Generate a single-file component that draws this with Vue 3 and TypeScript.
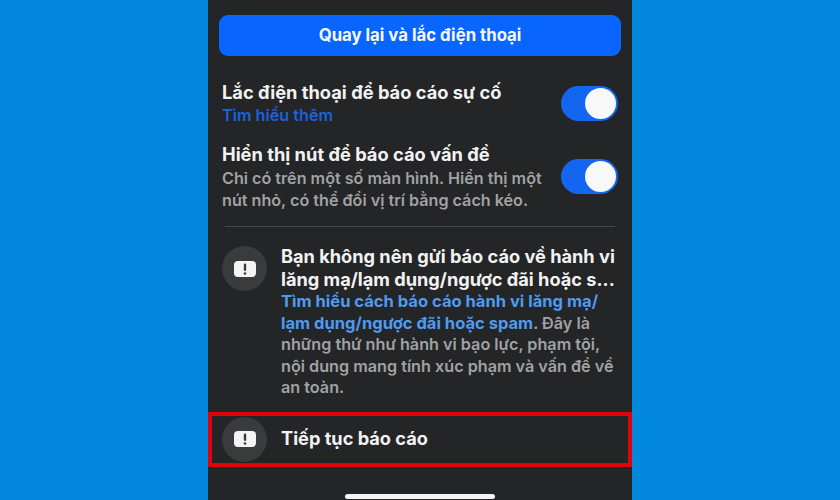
<script setup lang="ts">
const toggles = [
  { id: 1, title: 'Lắc điện thoại để báo cáo sự cố' },
  { id: 2, title: 'Hiển thị nút để báo cáo vấn đề' },
]
</script>

<template>
  <div class="stage">
    <main class="phone">
      <button class="cta">Quay lại và lắc điện thoại</button>

      <section class="row first">
        <div class="copy">
          <h2>{{ toggles[0].title }}</h2>
          <a class="more">Tìm hiểu thêm</a>
        </div>
        <span class="toggle"><i></i></span>
      </section>

      <section class="row second">
        <div class="copy">
          <h2>{{ toggles[1].title }}</h2>
          <p>Chỉ có trên một số màn hình. Hiển thị một<br />nút nhỏ, có thể đổi vị trí bằng cách kéo.</p>
        </div>
        <span class="toggle"><i></i></span>
      </section>

      <hr />

      <section class="notice">
        <span class="badge">
          <svg width="22" height="16" viewBox="0 0 22 16"><rect width="22" height="16" rx="4" fill="#f4f4f4" /><rect x="9.8" y="2.5" width="2.4" height="7.5" rx="1.2" fill="#3a3b3c" /><circle cx="11" cy="12.5" r="1.3" fill="#3a3b3c" /></svg>
        </span>
        <div class="notice-copy">
          <h3>Bạn không nên gửi báo cáo về hành vi<br />lăng mạ/lạm dụng/ngược đãi hoặc s...</h3>
          <p><b>Tìm hiểu cách báo cáo hành vi lăng mạ/<br />lạm dụng/ngược đãi hoặc spam</b>. Đây là<br />những thứ như hành vi bạo lực, phạm tội,<br />nội dung mang tính xúc phạm và vấn đề về<br />an toàn.</p>
        </div>
      </section>

      <section class="continue">
        <span class="badge">
          <svg width="22" height="16" viewBox="0 0 22 16"><rect width="22" height="16" rx="4" fill="#f4f4f4" /><rect x="9.8" y="2.5" width="2.4" height="7.5" rx="1.2" fill="#3a3b3c" /><circle cx="11" cy="12.5" r="1.3" fill="#3a3b3c" /></svg>
        </span>
        <strong>Tiếp tục báo cáo</strong>
      </section>

      <div class="home"></div>
    </main>
  </div>
</template>

<style scoped>
.stage {
  width: 840px;
  height: 500px;
  overflow: hidden;
  background: #0288dc;
  display: flex;
  justify-content: center;
  font-family: Inter, "Liberation Sans", sans-serif;
}
.phone {
  width: 424px;
  height: 500px;
  background: #242526;
  padding-top: 15px;
  box-sizing: border-box;
  display: flex;
  flex-direction: column;
}
.cta {
  width: 402px;
  height: 41px;
  margin: 0 11px;
  padding: 0 0 2px;
  flex: none;
  border: 0;
  border-radius: 9px;
  background: #0866ff;
  color: #f6f8ff;
  font: 700 16.75px Inter, "Liberation Sans", sans-serif;
}
.row {
  display: flex;
  justify-content: space-between;
  align-items: center;
  padding: 0 14px 0 14px;
}
.first { margin-top: 24px; }
.second { margin-top: 16px; }
h2 {
  margin: 0;
  color: #f2f2f2;
  font-size: 18.3px;
  line-height: 24px;
  font-weight: 700;
  white-space: nowrap;
}
.more {
  display: block;
  color: #1c62d8;
  font-size: 16.2px;
  font-weight: 600;
  line-height: 21px;
  margin-top: 1px;
}
.copy p {
  margin: 1px 0 0;
  color: #a0a2a5;
  font-size: 16.15px;
  font-weight: 600;
  line-height: 22px;
  white-space: nowrap;
}
.toggle {
  width: 57px;
  height: 35px;
  flex: none;
  box-sizing: border-box;
  padding: 2px 2px 2px 0;
  border-radius: 18px;
  background: #1366f0;
  display: flex;
  justify-content: flex-end;
}
.toggle i {
  width: 31px;
  height: 31px;
  border-radius: 50%;
  background: #f8f8f8;
}
hr {
  margin: 15px 17px 0 17px;
  border: 0;
  border-top: 1px solid #47484a;
}
.notice {
  display: flex;
  gap: 14px;
  padding: 18px 14px 0;
}
.notice .badge {
  margin-top: 1px;
}
.badge {
  width: 45px;
  height: 45px;
  flex: none;
  border-radius: 50%;
  background: #3a3b3c;
  display: flex;
  align-items: center;
  justify-content: center;
}
h3 {
  margin: 0;
  color: #f2f2f2;
  font-size: 18.2px;
  line-height: 23px;
  font-weight: 700;
  white-space: nowrap;
}
.notice-copy p {
  margin: 0;
  color: #a0a2a5;
  font-size: 16.2px;
  font-weight: 600;
  line-height: 21.6px;
  white-space: nowrap;
}
.notice-copy b {
  color: #4f9bf0;
  font-size: 16.55px;
  font-weight: 700;
}
.continue {
  margin-top: 13px;
  height: 55px;
  box-sizing: border-box;
  border: 4px solid #e0030f;
  display: flex;
  align-items: center;
  gap: 14px;
  padding-left: 10px;
}
.continue strong {
  color: #f2f2f2;
  font-size: 18.2px;
  font-weight: 700;
  padding-bottom: 3px;
}
.home {
  width: 150px;
  height: 5px;
  margin: 27px auto 0;
  flex: none;
  border-radius: 3px;
  background: #f4f4f4;
}
</style>
